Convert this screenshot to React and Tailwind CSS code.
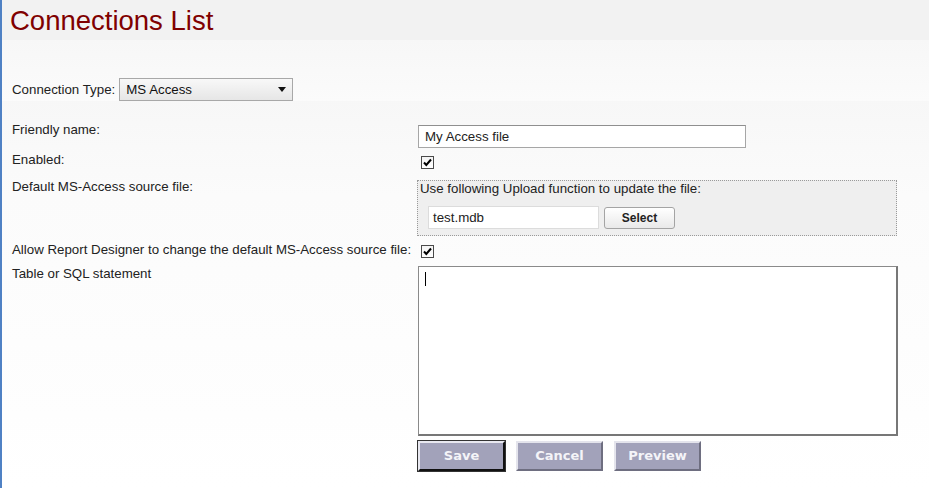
import React from 'react';

const font = { fontFamily: '"Liberation Sans", Arial, sans-serif' };

const CheckBox = () => (
  <span className="flex h-[13px] w-[13px] items-center justify-center border border-[#4a4a4a] bg-gradient-to-b from-[#f4f4f4] to-white">
    <svg width="11" height="11" viewBox="0 0 11 11">
      <path d="M2 5.5 L4.3 8 L9 2.5" fill="none" stroke="#000" strokeWidth="2" />
    </svg>
  </span>
);

const Label = ({ children }) => (
  <div className="w-[406px] shrink-0 leading-[16px] text-[#222]">{children}</div>
);

const ActionButton = ({ children, focused }) => (
  <button
    className={`h-[30px] w-[87px] bg-[#a2a2ba] text-[13px] font-bold text-[#f4f4f8] border-2 ${
      focused
        ? 'border-t-[#e8e8f0] border-l-[#e8e8f0] border-r-[#111] border-b-[#111] outline outline-1 outline-[#333]'
        : 'border-t-[#e4e4ec] border-l-[#e4e4ec] border-r-[#6e6e80] border-b-[#6e6e80]'
    }`}
    style={{ fontFamily: '"DejaVu Sans", Verdana, sans-serif' }}
  >
    {children}
  </button>
);

export default function App() {
  return (
    <div className="flex h-[488px] w-[929px] text-[13.3px]" style={font}>
      <div className="w-[2px] shrink-0 bg-[#4f81c4]" />
      <div className="flex-1 bg-gradient-to-b from-[#f3f3f3] via-[#fbfbfb] via-40% to-white">
        <div className="h-[40px] bg-[#f2f2f2] pl-[8px] pt-[5px]">
          <h1 className="text-[27.5px] leading-[32px] text-[#800000]">Connections List</h1>
        </div>

        <div className="bg-gradient-to-b from-[#f7f7f7] to-[#fbfbfb] pl-[10px] pt-[38px]">
          <div className="flex items-center gap-[4px]">
            <span className="text-[#222]">Connection Type:</span>
            <div className="flex h-[23px] w-[174px] items-center justify-between border border-[#a8a8a8] bg-gradient-to-b from-[#f8f8f8] to-[#e6e6e6] pl-[6px] pr-[6px] text-[#111]">
              <span>MS Access</span>
              <svg width="8" height="5" viewBox="0 0 8 5">
                <path d="M0 0 H8 L4 5 Z" fill="#111" />
              </svg>
            </div>
          </div>
        </div>

        <div className="flex flex-col pl-[10px] pt-[21px]">
          <div className="flex">
            <Label>Friendly name:</Label>
            <div className="mt-[3px] flex h-[23px] w-[328px] items-center border border-[#a6a6a6] border-t-[#8f8f8f] bg-white pl-[6px] text-[#222]">
              My Access file
            </div>
          </div>

          <div className="mt-[4px] flex">
            <Label>Enabled:</Label>
            <div className="mt-[4px] pl-[3px]">
              <CheckBox />
            </div>
          </div>

          <div className="mt-[10px] flex">
            <Label>Default MS-Access source file:</Label>
            <div className="mt-[1px] h-[56px] w-[480px] -ml-[1px] border border-dotted border-[#9a9a9a] bg-[#efefef] pl-[2px]">
              <div className="leading-[16px] text-[#222]">Use following Upload function to update the file:</div>
              <div className="mt-[9px] flex items-center gap-[5px] pl-[8px]">
                <div className="flex h-[23px] w-[171px] items-center border border-[#dcdcdc] bg-white pl-[4px] text-[#222]">
                  test.mdb
                </div>
                <div className="flex h-[22px] w-[71px] items-center justify-center rounded-[3px] border border-[#a4a4a4] bg-gradient-to-b from-white to-[#e9e9e9] text-[12px] font-bold text-[#222]">
                  Select
                </div>
              </div>
            </div>
          </div>

          <div className="mt-[6px] flex">
            <Label>Allow Report Designer to change the default MS-Access source file:</Label>
            <div className="mt-[3px] pl-[3px]">
              <CheckBox />
            </div>
          </div>

          <div className="mt-[8px] flex">
            <Label>Table or SQL statement</Label>
            <div className="h-[170px] w-[480px] border border-[#8a8a8a] border-r-2 border-b-2 border-r-[#777] border-b-[#777] bg-white pl-[6px] pt-[5px]">
              <div className="h-[14px] w-px bg-black" />
            </div>
          </div>

          <div className="mt-[5px] flex gap-[11px] pl-[406px]">
            <ActionButton focused>Save</ActionButton>
            <ActionButton>Cancel</ActionButton>
            <ActionButton>Preview</ActionButton>
          </div>
        </div>
      </div>
    </div>
  );
}
